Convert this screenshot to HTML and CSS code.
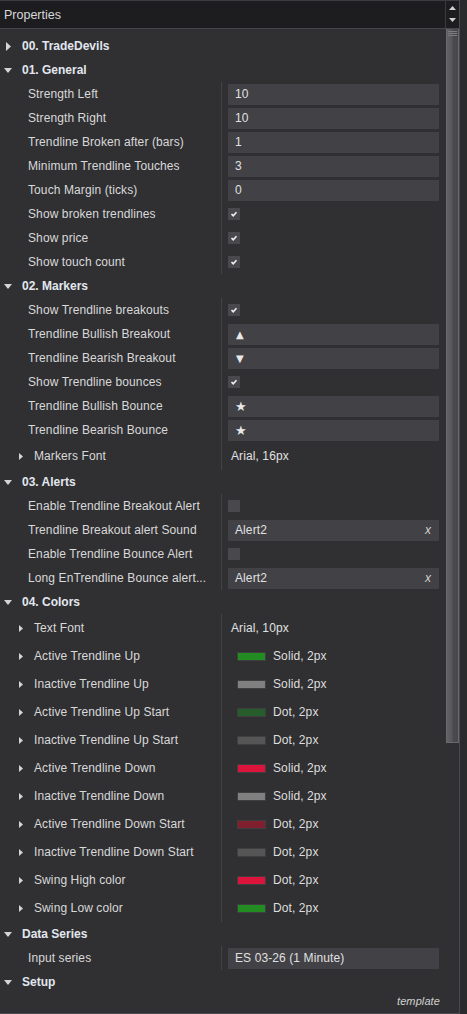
FILE: index.html
```html
<!DOCTYPE html>
<html>
<head>
<meta charset="utf-8">
<link rel="stylesheet" href="styles.css">
</head>
<body>
<div class="window">
  <div class="panel">
    <div class="header">
      <div class="title">Properties</div>
      <div class="hscroll">
        <svg width="7" height="4" viewBox="0 0 7 4"><polygon points="0,4 7,4 3.5,0" fill="#d0d0d0"/></svg>
        <svg width="7" height="4" viewBox="0 0 7 4"><polygon points="0,0 7,0 3.5,4" fill="#d0d0d0"/></svg>
      </div>
    </div>
    <div class="body">
      <div class="content">
        <div class="grp"><span class="caret"><svg class="cr" width="5" height="9" viewBox="0 0 5 9"><polygon points="0,0 5,4.5 0,9"/></svg></span>00. TradeDevils</div>

        <div class="grp"><span class="caret"><svg width="8" height="5" viewBox="0 0 8 5"><polygon points="0,0 8,0 4,5"/></svg></span>01. General</div>
        <div class="row"><div class="name">Strength Left</div><div class="val"><div class="input">10</div></div></div>
        <div class="row"><div class="name">Strength Right</div><div class="val"><div class="input">10</div></div></div>
        <div class="row"><div class="name">Trendline Broken after (bars)</div><div class="val"><div class="input">1</div></div></div>
        <div class="row"><div class="name">Minimum Trendline Touches</div><div class="val"><div class="input">3</div></div></div>
        <div class="row"><div class="name">Touch Margin (ticks)</div><div class="val"><div class="input">0</div></div></div>
        <div class="row"><div class="name">Show broken trendlines</div><div class="val"><span class="chk"><svg width="12" height="12" viewBox="0 0 12 12"><polyline points="3.5,6 5.2,7.8 8.5,4.2" fill="none" stroke="#f2f2f2" stroke-width="1.6"/></svg></span></div></div>
        <div class="row"><div class="name">Show price</div><div class="val"><span class="chk"><svg width="12" height="12" viewBox="0 0 12 12"><polyline points="3.5,6 5.2,7.8 8.5,4.2" fill="none" stroke="#f2f2f2" stroke-width="1.6"/></svg></span></div></div>
        <div class="row"><div class="name">Show touch count</div><div class="val"><span class="chk"><svg width="12" height="12" viewBox="0 0 12 12"><polyline points="3.5,6 5.2,7.8 8.5,4.2" fill="none" stroke="#f2f2f2" stroke-width="1.6"/></svg></span></div></div>

        <div class="grp"><span class="caret"><svg width="8" height="5" viewBox="0 0 8 5"><polygon points="0,0 8,0 4,5"/></svg></span>02. Markers</div>
        <div class="row"><div class="name">Show Trendline breakouts</div><div class="val"><span class="chk"><svg width="12" height="12" viewBox="0 0 12 12"><polyline points="3.5,6 5.2,7.8 8.5,4.2" fill="none" stroke="#f2f2f2" stroke-width="1.6"/></svg></span></div></div>
        <div class="row"><div class="name">Trendline Bullish Breakout</div><div class="val"><div class="input sym">▲</div></div></div>
        <div class="row"><div class="name">Trendline Bearish Breakout</div><div class="val"><div class="input sym">▼</div></div></div>
        <div class="row"><div class="name">Show Trendline bounces</div><div class="val"><span class="chk"><svg width="12" height="12" viewBox="0 0 12 12"><polyline points="3.5,6 5.2,7.8 8.5,4.2" fill="none" stroke="#f2f2f2" stroke-width="1.6"/></svg></span></div></div>
        <div class="row"><div class="name">Trendline Bullish Bounce</div><div class="val"><div class="input sym star">★</div></div></div>
        <div class="row"><div class="name">Trendline Bearish Bounce</div><div class="val"><div class="input sym star">★</div></div></div>
        <div class="row tall"><div class="name sub"><span class="subcaret"><svg width="4" height="7" viewBox="0 0 4 7"><polygon points="0,0 4,3.5 0,7"/></svg></span>Markers Font</div><div class="val"><span class="plain">Arial, 16px</span></div></div>

        <div class="grp"><span class="caret"><svg width="8" height="5" viewBox="0 0 8 5"><polygon points="0,0 8,0 4,5"/></svg></span>03. Alerts</div>
        <div class="row"><div class="name">Enable Trendline Breakout Alert</div><div class="val"><span class="chk"></span></div></div>
        <div class="row"><div class="name">Trendline Breakout alert Sound</div><div class="val"><div class="input">Alert2<span class="clear">x</span></div></div></div>
        <div class="row"><div class="name">Enable Trendline Bounce Alert</div><div class="val"><span class="chk"></span></div></div>
        <div class="row"><div class="name">Long EnTrendline Bounce alert...</div><div class="val"><div class="input">Alert2<span class="clear">x</span></div></div></div>

        <div class="grp"><span class="caret"><svg width="8" height="5" viewBox="0 0 8 5"><polygon points="0,0 8,0 4,5"/></svg></span>04. Colors</div>
        <div class="row tall"><div class="name sub"><span class="subcaret"><svg width="4" height="7" viewBox="0 0 4 7"><polygon points="0,0 4,3.5 0,7"/></svg></span>Text Font</div><div class="val"><span class="plain">Arial, 10px</span></div></div>
        <div class="row tall"><div class="name sub"><span class="subcaret"><svg width="4" height="7" viewBox="0 0 4 7"><polygon points="0,0 4,3.5 0,7"/></svg></span>Active Trendline Up</div><div class="val"><span class="sw green"></span><span class="swtext">Solid, 2px</span></div></div>
        <div class="row tall"><div class="name sub"><span class="subcaret"><svg width="4" height="7" viewBox="0 0 4 7"><polygon points="0,0 4,3.5 0,7"/></svg></span>Inactive Trendline Up</div><div class="val"><span class="sw gray"></span><span class="swtext">Solid, 2px</span></div></div>
        <div class="row tall"><div class="name sub"><span class="subcaret"><svg width="4" height="7" viewBox="0 0 4 7"><polygon points="0,0 4,3.5 0,7"/></svg></span>Active Trendline Up Start</div><div class="val"><span class="sw dkgreen"></span><span class="swtext">Dot, 2px</span></div></div>
        <div class="row tall"><div class="name sub"><span class="subcaret"><svg width="4" height="7" viewBox="0 0 4 7"><polygon points="0,0 4,3.5 0,7"/></svg></span>Inactive Trendline Up Start</div><div class="val"><span class="sw dkgray"></span><span class="swtext">Dot, 2px</span></div></div>
        <div class="row tall"><div class="name sub"><span class="subcaret"><svg width="4" height="7" viewBox="0 0 4 7"><polygon points="0,0 4,3.5 0,7"/></svg></span>Active Trendline Down</div><div class="val"><span class="sw red"></span><span class="swtext">Solid, 2px</span></div></div>
        <div class="row tall"><div class="name sub"><span class="subcaret"><svg width="4" height="7" viewBox="0 0 4 7"><polygon points="0,0 4,3.5 0,7"/></svg></span>Inactive Trendline Down</div><div class="val"><span class="sw gray"></span><span class="swtext">Solid, 2px</span></div></div>
        <div class="row tall"><div class="name sub"><span class="subcaret"><svg width="4" height="7" viewBox="0 0 4 7"><polygon points="0,0 4,3.5 0,7"/></svg></span>Active Trendline Down Start</div><div class="val"><span class="sw dkred"></span><span class="swtext">Dot, 2px</span></div></div>
        <div class="row tall"><div class="name sub"><span class="subcaret"><svg width="4" height="7" viewBox="0 0 4 7"><polygon points="0,0 4,3.5 0,7"/></svg></span>Inactive Trendline Down Start</div><div class="val"><span class="sw dkgray"></span><span class="swtext">Dot, 2px</span></div></div>
        <div class="row tall"><div class="name sub"><span class="subcaret"><svg width="4" height="7" viewBox="0 0 4 7"><polygon points="0,0 4,3.5 0,7"/></svg></span>Swing High color</div><div class="val"><span class="sw red"></span><span class="swtext">Dot, 2px</span></div></div>
        <div class="row tall"><div class="name sub"><span class="subcaret"><svg width="4" height="7" viewBox="0 0 4 7"><polygon points="0,0 4,3.5 0,7"/></svg></span>Swing Low color</div><div class="val"><span class="sw green"></span><span class="swtext">Dot, 2px</span></div></div>

        <div class="grp"><span class="caret"><svg width="8" height="5" viewBox="0 0 8 5"><polygon points="0,0 8,0 4,5"/></svg></span>Data Series</div>
        <div class="row"><div class="name">Input series</div><div class="val"><div class="input">ES 03-26 (1 Minute)</div></div></div>

        <div class="grp"><span class="caret"><svg width="8" height="5" viewBox="0 0 8 5"><polygon points="0,0 8,0 4,5"/></svg></span>Setup</div>
        <div class="footer">template</div>
      </div>
      <div class="vscroll">
        <div class="thumb"><span></span><span></span><span></span></div>
      </div>
    </div>
  </div>
  <div class="strip"></div>
</div>
</body>
</html>
```
FILE: styles.css
```css
html, body {
  margin: 0;
  padding: 0;
  background: #2b2b2e;
}
body {
  font-family: "Liberation Sans", Arial, sans-serif;
  font-size: 12px;
  color: #d6d6d6;
  letter-spacing: 0.1px;
}
.window {
  display: flex;
  width: 467px;
  height: 1014px;
}
.panel {
  width: 460px;
  border-right: 1px solid #4a4a4e;
  display: flex;
  flex-direction: column;
  background: #303033;
  border-bottom: 1px solid #4a4a4e;
  box-sizing: border-box;
  height: 1014px;
}
.strip {
  flex: 1;
  background: #2b2b2e;
}
.header {
  height: 27px;
  border-top: 1px solid #3c3c40;
  border-bottom: 1px solid #47474b;
  background: #1d1d1f;
  display: flex;
}
.title {
  flex: 1;
  padding-left: 4px;
  display: flex;
  align-items: center;
  font-size: 12.5px;
  color: #d8d8d8;
  padding-top: 1px;
  letter-spacing: 0;
}
.hscroll {
  width: 13px;
  border-left: 1px solid #3a3a3d;
  display: flex;
  flex-direction: column;
  align-items: center;
  justify-content: space-between;
  padding: 5px 0 6px;
}
.body {
  flex: 1;
  display: flex;
  min-height: 0;
}
.content {
  flex: 1;
  padding-top: 5px;
  display: flex;
  flex-direction: column;
}
.grp {
  height: 24px;
  display: flex;
  align-items: center;
  padding-left: 4px;
  font-weight: bold;
  color: #e2e7ef;
  letter-spacing: 0;
}
.caret {
  width: 18px;
  display: flex;
  align-items: center;
}
.caret svg {
  fill: #d4d4d4;
}
.caret .cr {
  margin-left: 2px;
}
.row {
  height: 24px;
  display: flex;
}
.row.tall {
  height: 28px;
}
.name {
  width: 221px;
  box-sizing: border-box;
  padding-left: 28px;
  display: flex;
  align-items: center;
  white-space: nowrap;
  overflow: hidden;
  color: #d9d9d9;
}
.name.sub {
  padding-left: 19px;
}
.subcaret {
  width: 15px;
  display: flex;
  align-items: center;
}
.subcaret svg {
  fill: #d4d4d4;
}
.val {
  flex: 1;
  border-left: 1px solid #434347;
  display: flex;
  align-items: center;
  padding-left: 6px;
  padding-right: 7px;
}
.input {
  flex: 1;
  height: 21px;
  background: #414146;
  display: flex;
  align-items: center;
  padding-left: 7px;
  padding-right: 8px;
  color: #e0e0e0;
}
.input.sym {
  font-family: "DejaVu Sans", sans-serif;
  font-size: 10px;
  padding-left: 8px;
  color: #e8e8e8;
}
.input.star {
  font-size: 13px;
  padding-left: 7px;
}
.clear {
  margin-left: auto;
  font-style: italic;
  color: #cfcfcf;
}
.chk {
  width: 12px;
  height: 12px;
  background: #48484d;
  display: block;
}
.chk svg {
  display: block;
}
.plain {
  padding-left: 3px;
  color: #e0e0e0;
}
.sw {
  width: 27px;
  height: 7px;
  border: 1px solid #3e3e40;
  margin-left: 9px;
  margin-right: 7px;
}
.green { background: #228b22; }
.gray { background: #808080; }
.dkgreen { background: #275d2a; }
.dkgray { background: #555555; }
.red { background: #dc143c; }
.dkred { background: #80202f; }
.swtext {
  color: #dedede;
}
.footer {
  height: 14px;
  display: flex;
  align-items: center;
  justify-content: flex-end;
  padding-right: 6px;
  font-style: italic;
  font-size: 11px;
  color: #d0d0d0;
}
.vscroll {
  width: 13px;
  display: flex;
  flex-direction: column;
}
.thumb {
  height: 714px;
  box-sizing: border-box;
  border: 1px solid #6a6a6e;
  border-top: none;
  background: linear-gradient(to right, #626266 0%, #58585c 45%, #4a4a4e 55%, #48484c 100%);
  display: flex;
  flex-direction: column;
  align-items: center;
  padding-top: 2px;
  gap: 1px;
}
.thumb span {
  width: 9px;
  height: 1px;
  background: #7c7c80;
}
```
